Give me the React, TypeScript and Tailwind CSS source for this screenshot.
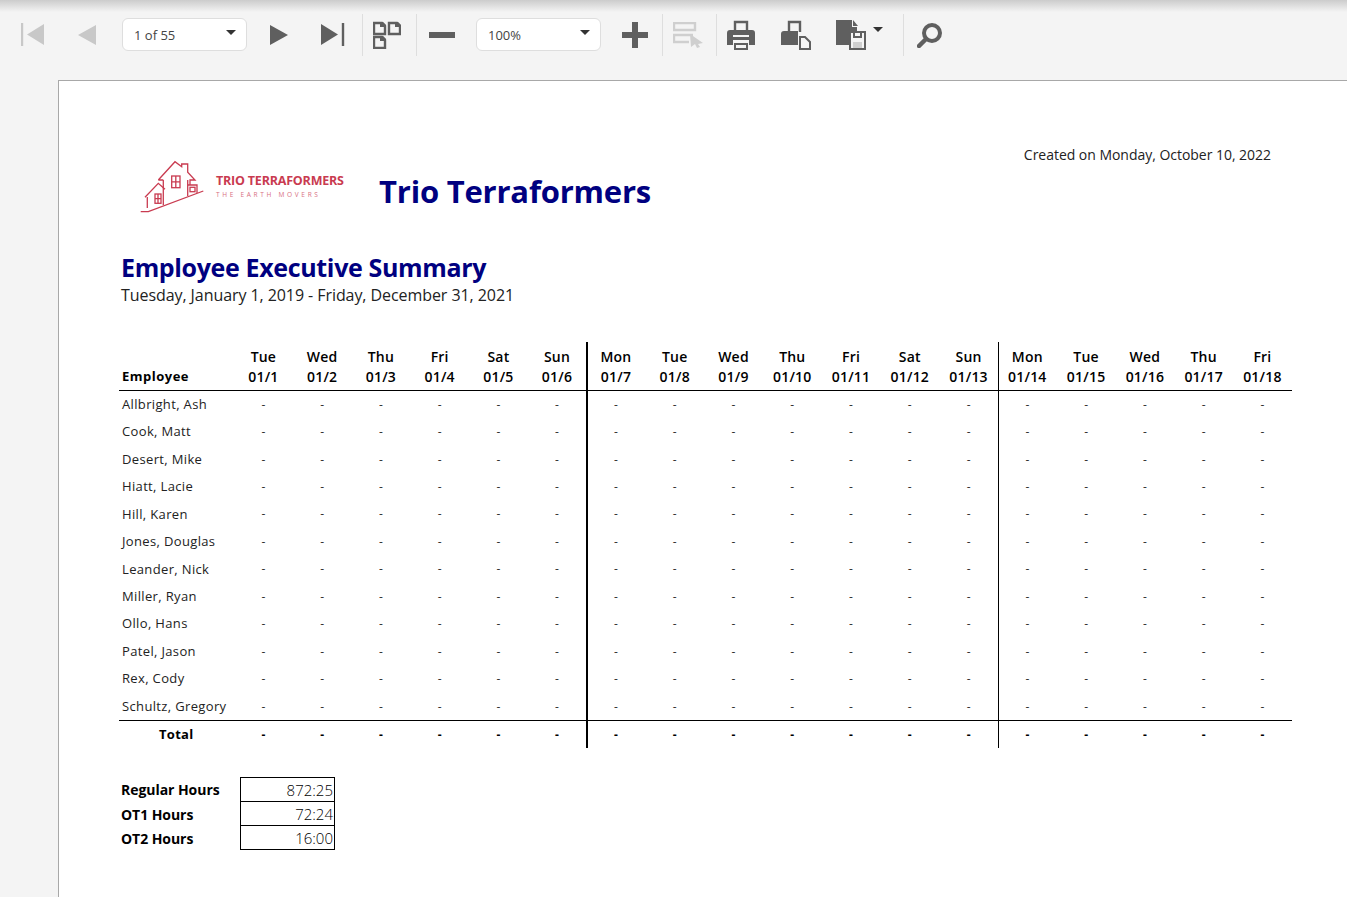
const days = [
  ["Tue", "01/1"], ["Wed", "01/2"], ["Thu", "01/3"], ["Fri", "01/4"], ["Sat", "01/5"], ["Sun", "01/6"],
  ["Mon", "01/7"], ["Tue", "01/8"], ["Wed", "01/9"], ["Thu", "01/10"], ["Fri", "01/11"], ["Sat", "01/12"], ["Sun", "01/13"],
  ["Mon", "01/14"], ["Tue", "01/15"], ["Wed", "01/16"], ["Thu", "01/17"], ["Fri", "01/18"],
];

const employees = [
  "Allbright, Ash", "Cook, Matt", "Desert, Mike", "Hiatt, Lacie", "Hill, Karen", "Jones, Douglas",
  "Leander, Nick", "Miller, Ryan", "Ollo, Hans", "Patel, Jason", "Rex, Cody", "Schultz, Gregory",
];

const hours = [
  ["Regular Hours", "872:25"],
  ["OT1 Hours", "72:24"],
  ["OT2 Hours", "16:00"],
];

const rowGrid = "grid grid-cols-[115px_repeat(18,58.77px)]";

const divider = (i: number) =>
  i === 5 ? "border-r-2 border-black -mr-[1.500px]" : i === 12 ? "border-r border-black -mr-[1px]" : "";

const Sep = () => <div className="w-px h-[42px] bg-[#dedede] shrink-0" />;

const Caret = () => (
  <svg width="10" height="5" viewBox="0 0 10 5" className="shrink-0">
    <path d="M0 0h10L5 5z" fill="#333" />
  </svg>
);

const Select = ({ label }: { label: string }) => (
  <div className="w-[125px] h-[33px] -mt-px shrink-0 bg-white border border-[#dedede] rounded-md flex items-center justify-between pl-3 pr-[10px]">
    <span className="text-[13px] text-[#444] leading-none pt-[2px] -ml-px">{label}</span>
    <span className="-mt-[5px] flex"><Caret /></span>
  </div>
);

const Doc = ({ x, y }: { x: number; y: number }) => (
  <g>
    <path d={`M${x + 1} ${y + 1}h8l3 3v8h-11z`} fill="none" stroke="#5f5f5f" strokeWidth="2.400" />
    <path d={`M${x + 7} ${y}h3l3 3v2h-6z`} fill="#5f5f5f" />
  </g>
);

const Logo = () => (
  <div className="flex items-start shrink-0 w-[240px] pl-[21px]">
    <svg width="66" height="54" viewBox="0 0 66 54" className="shrink-0 mt-[20px]">
      <g fill="none" stroke="#c93b50" strokeWidth="1.300">
        <path d="M0.700 51.700h7.600L63.300 31" />
        <path d="M7.300 48V37M5 37.300L18.300 23.300L25 29.300M23.300 29V45" />
        <path d="M18.300 20L35 1.700L41.700 6.700V4H47.700V12.300L55 20H50V25M23.300 20V29M18.300 20H23.300" />
        <path d="M47.700 20V36M47.700 25H57V33" />
        <rect x="31.700" y="16" width="8.300" height="11.700" />
        <path d="M35.800 16v11.700M31.700 21.800H40" />
        <rect x="15" y="34" width="6" height="9.300" />
        <path d="M18 34v9.300M15 38.600h6" />
        <rect x="50" y="27.300" width="5" height="4.400" />
      </g>
    </svg>
    <div className="mt-[34px] ml-[10px] text-[#c93b50] whitespace-nowrap">
      <div className="text-[12.500px] font-bold leading-[14px] tracking-[-0.2px]">TRIO TERRAFORMERS</div>
      <div className="text-[6.500px] leading-[8px] mt-[3px] tracking-[2.700px] text-[#d8707f]">THE EARTH MOVERS</div>
    </div>
  </div>
);

export default function App() {
  return (
    <div className="w-[1347px] h-[897px] overflow-hidden flex flex-col bg-[#f4f4f4] font-['Open_Sans',sans-serif] text-black">
      <div className="h-[80px] shrink-0 flex flex-col">
        <div className="h-[12px] shrink-0 bg-gradient-to-b from-[#cccccc] to-[#f4f4f4] -mb-[12px]" />
        <div className="flex items-center h-[42px] mt-[14px] pl-[21px]">
          <svg width="24" height="24" viewBox="0 0 24 24" className="shrink-0">
            <path d="M1 0v23" stroke="#c8c8c8" strokeWidth="2.400" />
            <path d="M23 1v21L6 11.500z" fill="#c8c8c8" />
          </svg>
          <svg width="18" height="20" viewBox="0 0 18 20" className="shrink-0 ml-[33px]">
            <path d="M18 0v20L0 10z" fill="#c8c8c8" />
          </svg>
          <div className="ml-[26px]"><Select label="1 of 55" /></div>
          <svg width="18" height="20" viewBox="0 0 18 20" className="shrink-0 ml-[23px]">
            <path d="M0 0v20l18-10z" fill="#5f5f5f" />
          </svg>
          <svg width="24" height="24" viewBox="0 0 24 24" className="shrink-0 ml-[33px]">
            <path d="M0 1v21l17-10.500z" fill="#5f5f5f" />
            <path d="M22 0v23" stroke="#5f5f5f" strokeWidth="2.400" />
          </svg>
          <div className="ml-[17px]"><Sep /></div>
          <svg width="28" height="28" viewBox="0 0 28 28" className="shrink-0 ml-[10px]">
            <Doc x={0} y={1} />
            <Doc x={15} y={1} />
            <Doc x={0} y={15} />
          </svg>
          <div className="ml-[15px]"><Sep /></div>
          <svg width="26" height="6" viewBox="0 0 26 6" className="shrink-0 ml-[12px]">
            <rect width="26" height="6" fill="#5f5f5f" />
          </svg>
          <div className="ml-[21px]"><Select label="100%" /></div>
          <svg width="26" height="26" viewBox="0 0 26 26" className="shrink-0 ml-[21px]">
            <path d="M10 0h6v10h10v6H16v10h-6V16H0v-6h10z" fill="#5f5f5f" />
          </svg>
          <div className="ml-[14px]"><Sep /></div>
          <svg width="30" height="26" viewBox="0 0 30 26" className="shrink-0 ml-[10px]">
            <path d="M1 1h21v7H1zM20 13H1v7h15" fill="none" stroke="#cfcfcf" strokeWidth="2.400" />
            <path d="M17 12l13 9-5 1 2 3-3 1-2-4-4 3z" fill="#cfcfcf" />
          </svg>
          <div className="ml-[13px]"><Sep /></div>
          <svg width="28" height="30" viewBox="0 0 28 30" className="shrink-0 ml-[10px]">
            <path d="M8 11V2h12v9" fill="none" stroke="#5f5f5f" strokeWidth="2.400" />
            <path d="M3 10h22a3 3 0 0 1 3 3v12h-6v-5H6v5H0V13a3 3 0 0 1 3-3z" fill="#5f5f5f" />
            <path d="M6 15h16v2H6z" fill="#f4f4f4" />
            <path d="M8 24h12v5H8z" fill="none" stroke="#5f5f5f" strokeWidth="2" />
          </svg>
          <svg width="30" height="30" viewBox="0 0 30 30" className="shrink-0 ml-[26px]">
            <path d="M8 12V2h11v10" fill="none" stroke="#5f5f5f" strokeWidth="2.400" />
            <path d="M3 11h14v14H0V14a3 3 0 0 1 3-3z" fill="#5f5f5f" />
            <path d="M19 17h5l5 5v7H19z" fill="#f4f4f4" stroke="#5f5f5f" strokeWidth="2" />
          </svg>
          <svg width="30" height="30" viewBox="0 0 30 30" className="shrink-0 ml-[25px]">
            <path d="M0 0h16v7h5v4H13v14H0z" fill="#5f5f5f" />
            <path d="M17 0l5 6h-5z" fill="#5f5f5f" />
            <path d="M14 12h15v17H14z" fill="#f4f4f4" stroke="#5f5f5f" strokeWidth="2" />
            <path d="M18 12h7v5h-7z" fill="none" stroke="#5f5f5f" strokeWidth="2" />
            <path d="M17 22h9v6h-9z" fill="#cfcfcf" />
          </svg>
          <div className="ml-[7px] -mt-[12px] flex"><Caret /></div>
          <div className="ml-[20px]"><Sep /></div>
          <svg width="25" height="25" viewBox="0 0 25 25" className="shrink-0 ml-[13px]">
            <circle cx="15" cy="10" r="8" fill="none" stroke="#5f5f5f" strokeWidth="4" />
            <path d="M9 16l-7 7" stroke="#5f5f5f" strokeWidth="4.500" strokeLinecap="round" />
          </svg>
        </div>
      </div>

      <div className="ml-[58px] w-[1289px] flex-1 bg-white border-l border-t border-[#a8a8a8] pl-[60px]">
        <div className="w-[1173px] flex flex-col">
          <div className="flex items-start mt-[59px] h-[110px]">
            <Logo />
            <div className="mt-[29px] ml-[20px] text-[31px] font-bold text-[#000080] leading-[44px] tracking-[-0.2px] whitespace-nowrap">
              Trio Terraformers
            </div>
            <div className="ml-auto mr-[21px] mt-[6px] text-[14px] leading-[18px] text-[#222] tracking-[-0.03px]">
              Created on Monday, October 10, 2022
            </div>
          </div>

          <div className="ml-[2px] text-[25px] font-bold text-[#000080] leading-[35px] tracking-[-0.35px]">
            Employee Executive Summary
          </div>
          <div className="ml-[2px] text-[16px] leading-[20px] text-[#222] tracking-[-0.07px]">
            Tuesday, January 1, 2019 - Friday, December 31, 2021
          </div>

          <div className="mt-[37px] flex flex-col">
            <div className={`${rowGrid} h-[49px] border-b border-black`}>
              <div className="self-end pl-[3px] pb-[5px] text-[13px] font-bold leading-[18px] tracking-[0.5px]">Employee</div>
              {days.map(([day, date], i) => (
                <div
                  key={date}
                  className={`flex flex-col items-center justify-end pb-[3px] text-[14px] font-semibold leading-[20px] tracking-[0.2px] ${divider(i)}`}
                >
                  <span>{day}</span>
                  <span>{date}</span>
                </div>
              ))}
            </div>

            {employees.map((name) => (
              <div key={name} className={`${rowGrid} h-[27.450px]`}>
                <div className="pl-[3px] flex items-center text-[13px] text-[#222] whitespace-nowrap tracking-[0.35px]">{name}</div>
                {days.map(([, date], i) => (
                  <div key={date} className={`flex items-center justify-center text-[12px] text-[#333] ${divider(i)}`}>
                    -
                  </div>
                ))}
              </div>
            ))}

            <div className={`${rowGrid} h-[28px] border-t border-black`}>
              <div className="pl-[40px] flex items-center text-[13px] font-bold tracking-[0.3px]">Total</div>
              {days.map(([, date], i) => (
                <div key={date} className={`flex items-center justify-center text-[12px] font-bold ${divider(i)}`}>
                  -
                </div>
              ))}
            </div>
          </div>

          <div className="mt-[29px] ml-[2px] flex">
            <div className="w-[119px] flex flex-col">
              {hours.map(([label]) => (
                <div key={label} className="h-[24.500px] flex items-center text-[14px] font-bold tracking-[-0.05px]">
                  {label}
                </div>
              ))}
            </div>
            <div className="w-[95px] h-[73px] border border-black flex flex-col">
              {hours.map(([label, value], i) => (
                <div
                  key={label}
                  className={`flex-1 flex items-center justify-end pr-[1px] text-[15px] font-light text-black ${i > 0 ? "border-t border-black" : ""}`}
                >
                  {value}
                </div>
              ))}
            </div>
          </div>
        </div>
      </div>
    </div>
  );
}
